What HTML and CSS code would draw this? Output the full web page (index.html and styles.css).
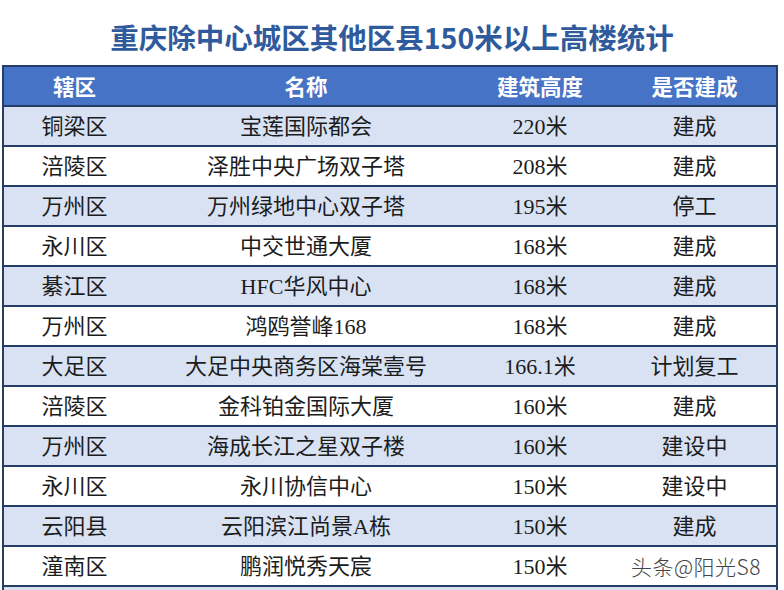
FILE: index.html
```html
<!DOCTYPE html>
<html lang="zh-CN">
<head>
<meta charset="utf-8">
<title>重庆除中心城区其他区县150米以上高楼统计</title>
<link rel="stylesheet" href="styles.css">
</head>
<body>
<div class="page">
  <h1 class="title">重庆除中心城区其他区县150米以上高楼统计</h1>
  <div class="sheet">
    <div class="row head">
      <div class="c">辖区</div><div class="c">名称</div><div class="c">建筑高度</div><div class="c">是否建成</div>
    </div>
    <div class="row alt"><div class="c">铜梁区</div><div class="c">宝莲国际都会</div><div class="c">220米</div><div class="c">建成</div></div>
    <div class="row"><div class="c">涪陵区</div><div class="c">泽胜中央广场双子塔</div><div class="c">208米</div><div class="c">建成</div></div>
    <div class="row alt"><div class="c">万州区</div><div class="c">万州绿地中心双子塔</div><div class="c">195米</div><div class="c">停工</div></div>
    <div class="row"><div class="c">永川区</div><div class="c">中交世通大厦</div><div class="c">168米</div><div class="c">建成</div></div>
    <div class="row alt"><div class="c">綦江区</div><div class="c">HFC华风中心</div><div class="c">168米</div><div class="c">建成</div></div>
    <div class="row"><div class="c">万州区</div><div class="c">鸿鸥誉峰168</div><div class="c">168米</div><div class="c">建成</div></div>
    <div class="row alt"><div class="c">大足区</div><div class="c">大足中央商务区海棠壹号</div><div class="c">166.1米</div><div class="c">计划复工</div></div>
    <div class="row"><div class="c">涪陵区</div><div class="c">金科铂金国际大厦</div><div class="c">160米</div><div class="c">建成</div></div>
    <div class="row alt"><div class="c">万州区</div><div class="c">海成长江之星双子楼</div><div class="c">160米</div><div class="c">建设中</div></div>
    <div class="row"><div class="c">永川区</div><div class="c">永川协信中心</div><div class="c">150米</div><div class="c">建设中</div></div>
    <div class="row alt"><div class="c">云阳县</div><div class="c">云阳滨江尚景A栋</div><div class="c">150米</div><div class="c">建成</div></div>
    <div class="row"><div class="c">潼南区</div><div class="c">鹏润悦秀天宸</div><div class="c">150米</div><div class="c"></div></div>
    <div class="row alt"><div class="c"></div><div class="c"></div><div class="c"></div><div class="c"></div></div>
  </div>
  <div class="watermark">头条@阳光S8</div>
</div>
</body>
</html>
```
FILE: styles.css
```css
html, body {
  margin: 0;
  padding: 0;
  background: #ffffff;
  overflow: hidden;
}
.page {
  position: relative;
  width: 784px;
  height: 590px;
  overflow: hidden;
}
.title {
  margin: 0;
  height: 65px;
  padding-top: 19px;
  box-sizing: border-box;
  text-align: center;
  font-family: "Noto Sans CJK SC", sans-serif;
  font-weight: 700;
  font-size: 28.5px;
  line-height: 36px;
  color: #2f5a9c;
}
.sheet {
  margin-left: 2px;
  width: 776px;
  box-sizing: border-box;
  border-top: 2px solid #253e68;
  border-left: 2px solid #253e68;
  border-right: 2px solid #253e68;
}
.row {
  display: grid;
  grid-template-columns: 141px 322px 146px 1fr;
  height: 40px;
  padding-top: 2px;
  box-sizing: border-box;
  border-bottom: 2px solid #253e68;
  background: #ffffff;
  font-family: "Liberation Serif", "Noto Sans CJK SC", serif;
  font-size: 22px;
  color: #1c1c1c;
}
.row.alt {
  background: #d8e2f3;
}
.row.head {
  height: 40px;
  padding-top: 0;
  background: #4673c6;
  color: #ffffff;
  font-family: "Noto Sans CJK SC", sans-serif;
  font-weight: 700;
  font-size: 21.5px;
}
.c {
  display: flex;
  align-items: center;
  justify-content: center;
  white-space: nowrap;
  line-height: 1;
}
.watermark {
  position: absolute;
  left: 631px;
  top: 552px;
  font-family: "Noto Sans CJK SC", sans-serif;
  font-weight: 300;
  font-size: 21px;
  letter-spacing: 0.5px;
  line-height: 28px;
  color: #444444;
  text-shadow: 0 0 2px #ffffff, 0 0 2px #ffffff;
}
```
